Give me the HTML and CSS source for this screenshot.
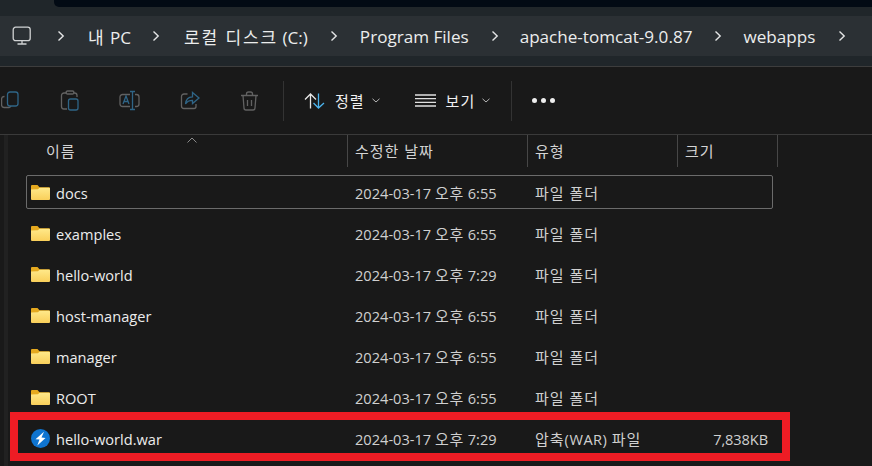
FILE: index.html
```html
<!DOCTYPE html>
<html lang="ko">
<head>
    <meta charset="UTF-8">
    <meta name="viewport" content="width=device-width, initial-scale=1.0">
    <title>webapps</title>
    <link rel="stylesheet" href="styles.css">
</head>
<body>

    <div class="top-strip"><div class="top-dark"></div></div>

    <div class="address-wrap">
        <nav class="address-bar">
            <svg class="pc-icon" width="20" height="20" viewBox="0 0 20 20" fill="none" stroke="#d0d2d3" stroke-width="1.3">
                <rect x="1.2" y="1.2" width="17" height="13.5" rx="2.5"/>
                <path d="M10 14.7v3M5.5 18h9"/>
            </svg>
            <span class="crumb-sep sep-1"><svg width="8" height="12" viewBox="0 0 8 12"><path d="M1.5 1.5 6.2 6l-4.700 4.500" fill="none" stroke="#e4e5e6" stroke-width="1.4"/></svg></span>
            <span class="crumb c-pc"><span class="ko">내</span> PC</span>
            <span class="crumb-sep sep-2"><svg width="8" height="12" viewBox="0 0 8 12"><path d="M1.5 1.500 6.200 6l-4.700 4.500" fill="none" stroke="#e4e5e6" stroke-width="1.4"/></svg></span>
            <span class="crumb c-disk"><span class="ko">로컬 디스크</span> (C:)</span>
            <span class="crumb-sep sep-3"><svg width="8" height="12" viewBox="0 0 8 12"><path d="M1.5 1.500 6.200 6l-4.700 4.500" fill="none" stroke="#e4e5e6" stroke-width="1.4"/></svg></span>
            <span class="crumb c-prog">Program Files</span>
            <span class="crumb-sep sep-4"><svg width="8" height="12" viewBox="0 0 8 12"><path d="M1.5 1.500 6.200 6l-4.700 4.500" fill="none" stroke="#e4e5e6" stroke-width="1.4"/></svg></span>
            <span class="crumb c-tom">apache-tomcat-9.0.87</span>
            <span class="crumb-sep sep-5"><svg width="8" height="12" viewBox="0 0 8 12"><path d="M1.5 1.500 6.200 6l-4.700 4.500" fill="none" stroke="#e4e5e6" stroke-width="1.4"/></svg></span>
            <span class="crumb c-web">webapps</span>
            <span class="crumb-sep sep-6"><svg width="8" height="12" viewBox="0 0 8 12"><path d="M1.5 1.500 6.200 6l-4.700 4.500" fill="none" stroke="#e4e5e6" stroke-width="1.4"/></svg></span>
        </nav>
    </div>

    <div class="toolbar">
        <div class="tool-icons">
            <svg width="19" height="19" viewBox="0 0 19 19" fill="none" stroke-width="1.3"><path d="M3.500 5.500H3a2.500 2.500 0 0 0-2.400 2.500v6a2.500 2.500 0 0 0 2.400 2.500h5a2.500 2.500 0 0 0 2-1.500" stroke="#626262"/><rect x="7.500" y="1" width="10.500" height="14" rx="2.500" stroke="#2f6587" transform="translate(-1 0)"/></svg>
            <svg width="19" height="21" viewBox="0 0 19 21" fill="none" stroke-width="1.3"><path d="M7 3H4a2.500 2.500 0 0 0-2.500 2.500v11A2.500 2.500 0 0 0 4 19h3M13 3h1.500A2.500 2.500 0 0 1 17 5.500V7" stroke="#626262"/><rect x="6" y="1" width="8" height="3" rx="1.500" stroke="#626262"/><rect x="8.500" y="9" width="9.500" height="11" rx="2" stroke="#2f6587"/></svg>
            <svg width="21" height="21" viewBox="0 0 21 21" fill="none" stroke-width="1.3"><path d="M11 4.500H3.500a2.500 2.500 0 0 0-2.500 2.500v7a2.500 2.500 0 0 0 2.500 2.500H11M16 4.500h1.500A2.500 2.500 0 0 1 20 7v7a2.500 2.500 0 0 1-2.500 2.500H16" stroke="#626262"/><path d="M11 1.500h5M13.500 1.500v18M11 19.500h5M4 14l3-8 3 8M5 11.500h4" stroke="#2f6587"/></svg>
            <svg width="20" height="20" viewBox="0 0 20 20" fill="none" stroke-width="1.3"><path d="M7.500 3H4a2.500 2.500 0 0 0-2.500 2.500V15A2.500 2.500 0 0 0 4 17.500h10a2 2 0 0 0 2-2V13" stroke="#626262"/><path d="M12.500 1.500 19 7l-6.500 5.500V9.300C9 9.300 7 10.300 5.500 13c.3-4 2.800-7 7-7.200z" stroke="#2f6587"/></svg>
            <svg width="19" height="20" viewBox="0 0 19 20" fill="none" stroke="#626262" stroke-width="1.3"><path d="M1 4.500h17M6.500 4.500V3a2 2 0 0 1 2-2h2a2 2 0 0 1 2 2v1.500M3 4.500l1 12.500a2 2 0 0 0 2 2h7a2 2 0 0 0 2-2l1-12.500M7.500 9v6M11.500 9v6"/></svg>
        </div>
        <div class="tool-divider"></div>
        <button class="tool-btn btn-sort">
            <svg width="21" height="16" viewBox="0 0 21 16" fill="none" stroke-width="1.3"><path d="M6.500 15.500V1M1 6.500 6.500 1 12 6.500" stroke="#e6e6e6"/><path d="M14.500 .5V15M9.500 10l5 5 5.500-5" stroke="#4cb4ee"/></svg>
            <span class="btn-label ko">정렬</span>
            <svg class="chev" width="8" height="5" viewBox="0 0 8 5"><path d="M.5 .8 4 4 7.500 .8" fill="none" stroke="#b5b5b5" stroke-width="1"/></svg>
        </button>
        <button class="tool-btn btn-view">
            <svg width="21" height="13" viewBox="0 0 21 13" fill="none" stroke="#e0e0e0" stroke-width="1.300"><path d="M0 1h21M0 4.700h21M0 8.300h21M0 12h21"/></svg>
            <span class="btn-label ko">보기</span>
            <svg class="chev" width="8" height="5" viewBox="0 0 8 5"><path d="M.5 .8 4 4 7.500 .8" fill="none" stroke="#b5b5b5" stroke-width="1"/></svg>
        </button>
        <div class="tool-divider div-2"></div>
        <div class="more-dots"><i></i><i></i><i></i></div>
    </div>

    <main class="file-list">
        <div class="list-head">
            <svg class="sort-caret" width="10" height="6" viewBox="0 0 10 6"><path d="M.5 5.500 5 1l4.500 4.500" fill="none" stroke="#8a8a8a"/></svg>
            <div class="col-name ko">이름</div>
            <div class="col-date ko">수정한 날짜</div>
            <div class="col-type ko">유형</div>
            <div class="col-size ko">크기</div>
        </div>

        <div class="row focused">
            <div class="col-name"><svg class="folder" width="19" height="15" viewBox="0 0 19 15"><use href="#folder-icon"/></svg>docs</div>
            <div class="col-date">2024-03-17 <span class="ko">오후</span> 6:55</div>
            <div class="col-type ko">파일 폴더</div>
            <div class="col-size"></div>
        </div>
        <div class="row">
            <div class="col-name"><svg class="folder" width="19" height="15" viewBox="0 0 19 15"><use href="#folder-icon"/></svg>examples</div>
            <div class="col-date">2024-03-17 <span class="ko">오후</span> 6:55</div>
            <div class="col-type ko">파일 폴더</div>
            <div class="col-size"></div>
        </div>
        <div class="row">
            <div class="col-name"><svg class="folder" width="19" height="15" viewBox="0 0 19 15"><use href="#folder-icon"/></svg>hello-world</div>
            <div class="col-date">2024-03-17 <span class="ko">오후</span> 7:29</div>
            <div class="col-type ko">파일 폴더</div>
            <div class="col-size"></div>
        </div>
        <div class="row">
            <div class="col-name"><svg class="folder" width="19" height="15" viewBox="0 0 19 15"><use href="#folder-icon"/></svg>host-manager</div>
            <div class="col-date">2024-03-17 <span class="ko">오후</span> 6:55</div>
            <div class="col-type ko">파일 폴더</div>
            <div class="col-size"></div>
        </div>
        <div class="row">
            <div class="col-name"><svg class="folder" width="19" height="15" viewBox="0 0 19 15"><use href="#folder-icon"/></svg>manager</div>
            <div class="col-date">2024-03-17 <span class="ko">오후</span> 6:55</div>
            <div class="col-type ko">파일 폴더</div>
            <div class="col-size"></div>
        </div>
        <div class="row">
            <div class="col-name"><svg class="folder" width="19" height="15" viewBox="0 0 19 15"><use href="#folder-icon"/></svg>ROOT</div>
            <div class="col-date">2024-03-17 <span class="ko">오후</span> 6:55</div>
            <div class="col-type ko">파일 폴더</div>
            <div class="col-size"></div>
        </div>
        <div class="row">
            <div class="col-name">
                <svg class="folder" width="19" height="19" viewBox="0 0 19 19"><circle cx="9.500" cy="9.500" r="9.500" fill="#0f74d0"/><path d="M13 2.800 4.500 10.200l4 .4L6.300 16.500l8.200-7.600-4-.4z" fill="#fff"/></svg>hello-world.war
            </div>
            <div class="col-date">2024-03-17 <span class="ko">오후</span> 7:29</div>
            <div class="col-type type-war"><span class="ko">압축</span>(WAR) <span class="ko">파일</span></div>
            <div class="col-size size-val">7,838KB</div>
        </div>
    </main>

    <!-- red annotation drawn over the last row -->
    <div class="red-box"></div>

    <svg class="defs-only" width="0" height="0">
        <defs>
            <linearGradient id="folder-grad" x1="0" y1="0" x2="0" y2="1">
                <stop offset="0" stop-color="#ffe98a"/>
                <stop offset="1" stop-color="#f9cf5a"/>
            </linearGradient>
            <symbol id="folder-icon" viewBox="0 0 19 15">
                <path d="M1 0h5.500l2 2.200H18a1 1 0 0 1 1 1V5H0V1a1 1 0 0 1 1-1z" fill="#e5a91f"/>
                <path d="M0 4.500l7-.3 1.500-1.500H18a1 1 0 0 1 1 1V14a1 1 0 0 1-1 1H1a1 1 0 0 1-1-1z" fill="url(#folder-grad)"/>
            </symbol>
        </defs>
    </svg>

</body>
</html>
```

FILE: styles.css
```css
html, body {
    margin: 0;
    padding: 0;
}
body {
    position: relative;
    width: 872px;
    height: 466px;
    overflow: hidden;
    background-color: #191919;
    font-family: 'Open Sans', 'Noto Sans CJK KR', sans-serif;
    color: #e8e8e8;
}
.top-strip {
    height: 16px;
    background-color: #20262a;
}
.top-dark {
    height: 7px;
    margin-left: 54px;
    background-color: #020a14;
    border-bottom-left-radius: 5px;
}
.address-wrap {
    height: 50px;
    background-color: #20262a;
    border-bottom: 1px solid #3d3d3d;
}
.address-bar {
    display: flex;
    align-items: center;
    height: 40px;
    padding-left: 12px;
    background-color: #2b3034;
    font-size: 17.1px;
    color: #eceded;
    white-space: nowrap;
}
.address-bar .ko {
    font-size: 17px;
    letter-spacing: 1.9px;
}
.pc-icon {
    flex: none;
    margin-right: 25px;
}
.crumb-sep {
    display: flex;
    flex: none;
    width: 8px;
}
.c-pc { margin-left: 23px; margin-right: 21px; }
.c-disk { margin-left: 24px; margin-right: 22px; }
.c-prog { margin-left: 22px; margin-right: 22px; }
.c-tom { margin-left: 21px; margin-right: 22px; }
.c-web { margin-left: 21px; margin-right: 23px; }

.toolbar {
    display: flex;
    align-items: center;
    height: 68px;
    border-bottom: 1px solid #3a3a3a;
    box-sizing: border-box;
}
.tool-icons {
    display: flex;
    align-items: center;
    gap: 40px;
    padding-left: 1px;
    width: 283px;
    box-sizing: border-box;
}
.tool-divider {
    flex: none;
    width: 1px;
    height: 40px;
    background-color: #333;
}
.tool-btn {
    display: flex;
    align-items: center;
    padding: 0;
    background: none;
    border: none;
    color: #f0f0f0;
    font-family: inherit;
    font-size: 14px;
}
.btn-sort { margin-left: 20px; }
.btn-view { margin-left: 35px; }
.btn-label { margin-left: 10px; margin-right: 7px; }
.div-2 { margin-left: 21px; }
.more-dots {
    display: flex;
    gap: 4px;
    margin-left: 20px;
}
.more-dots i {
    width: 5px;
    height: 5px;
    border-radius: 50%;
    background-color: #eee;
}

.file-list {
    position: relative;
    height: 332px;
    font-size: 14.6px;
    background: linear-gradient(#212121, #212121) 4px 0 / 4px 100% no-repeat;
}
/* hangul runs wider than the latin font here */
.ko {
    font-size: 15px;
    letter-spacing: 1px;
}
.col-date .ko {
    letter-spacing: .7px;
}
.list-head, .row {
    display: grid;
    grid-template-columns: 348px 180px 150px 100px;
    align-items: center;
}
.list-head {
    height: 32px;
    color: #d4d4d4;
    margin-bottom: 5px;
}
.list-head > div {
    display: flex;
    align-items: center;
    height: 100%;
    padding-left: 7px;
    padding-bottom: 2px;
    border-right: 1px solid #474747;
    box-sizing: border-box;
}
.list-head .col-name {
    padding-left: 46px;
}
.sort-caret {
    position: absolute;
    left: 187px;
    top: 2px;
}
.row {
    height: 41px;
    box-sizing: border-box;
    color: #d0d0d0;
}
.row .col-name {
    display: flex;
    align-items: center;
    padding-left: 31px;
    color: #ececec;
}
.row .col-date, .row .col-type {
    padding-left: 7px;
}
.type-war {
    letter-spacing: .5px;
}
.folder {
    flex: none;
    margin-right: 6px;
}
.focused {
    position: relative;
}
.focused::before {
    content: "";
    position: absolute;
    left: 26px;
    top: 3px;
    width: 747px;
    height: 34px;
    box-sizing: border-box;
    border: 1px solid #6b6b6b;
    border-radius: 2px;
}
.size-val {
    text-align: right;
    padding-right: 10px;
    letter-spacing: -.1px;
}
.red-box {
    position: absolute;
    left: 10px;
    top: 412px;
    width: 780px;
    height: 49px;
    box-sizing: border-box;
    border: 8px solid #ed1c24;
}
.defs-only {
    position: absolute;
}
```
